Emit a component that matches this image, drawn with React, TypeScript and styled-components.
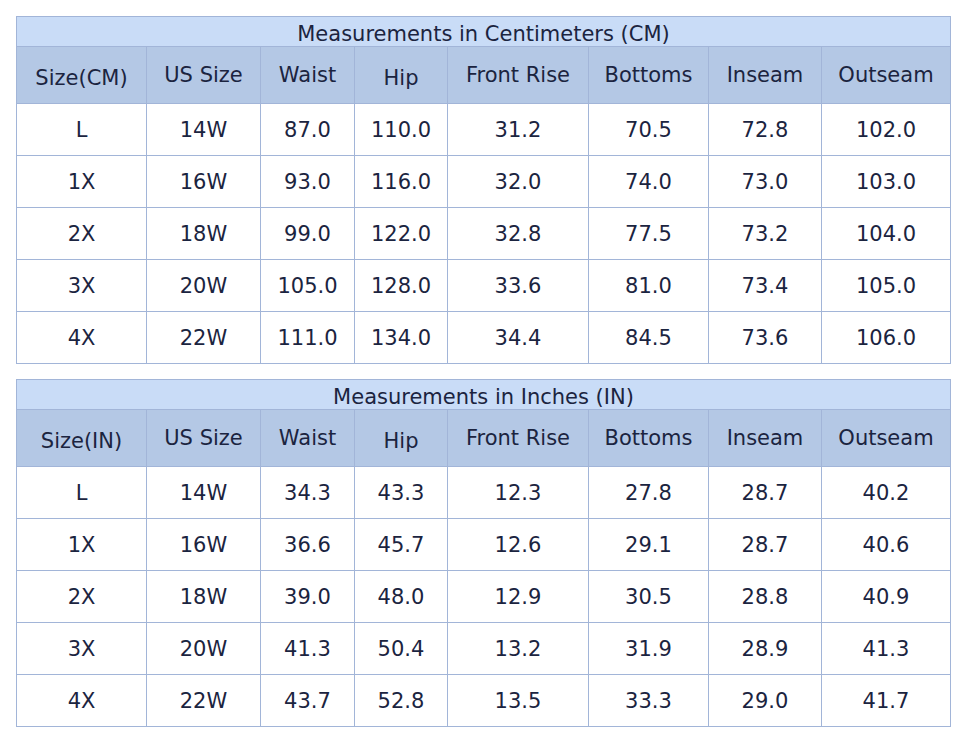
import React from 'react';
import styled, { createGlobalStyle } from 'styled-components';

const GlobalStyle = createGlobalStyle`
  html, body {
    margin: 0;
    padding: 0;
    background: #ffffff;
  }

  body {
    font-family: 'DejaVu Sans', Verdana, sans-serif;
    color: #1b2440;
  }
`;

type SizeTable = {
  title: string;
  unit: string;
  rows: string[][];
};

const COLUMNS = ['US Size', 'Waist', 'Hip', 'Front Rise', 'Bottoms', 'Inseam', 'Outseam'];

// headers that sit a little lower in the original
const LOWERED = ['Hip'];

const TABLES: SizeTable[] = [
  {
    title: 'Measurements in Centimeters (CM)',
    unit: 'Size(CM)',
    rows: [
      ['L', '14W', '87.0', '110.0', '31.2', '70.5', '72.8', '102.0'],
      ['1X', '16W', '93.0', '116.0', '32.0', '74.0', '73.0', '103.0'],
      ['2X', '18W', '99.0', '122.0', '32.8', '77.5', '73.2', '104.0'],
      ['3X', '20W', '105.0', '128.0', '33.6', '81.0', '73.4', '105.0'],
      ['4X', '22W', '111.0', '134.0', '34.4', '84.5', '73.6', '106.0'],
    ],
  },
  {
    title: 'Measurements in Inches (IN)',
    unit: 'Size(IN)',
    rows: [
      ['L', '14W', '34.3', '43.3', '12.3', '27.8', '28.7', '40.2'],
      ['1X', '16W', '36.6', '45.7', '12.6', '29.1', '28.7', '40.6'],
      ['2X', '18W', '39.0', '48.0', '12.9', '30.5', '28.8', '40.9'],
      ['3X', '20W', '41.3', '50.4', '13.2', '31.9', '28.9', '41.3'],
      ['4X', '22W', '43.7', '52.8', '13.5', '33.3', '29.0', '41.7'],
    ],
  },
];

const App = () => {
  return (
    <>
      <GlobalStyle />
      <S.Page>
        {TABLES.map((table) => (
          <S.Table key={table.title}>
            <S.Title>{table.title}</S.Title>
            <S.HeadCell $lowered>{table.unit}</S.HeadCell>
            {COLUMNS.map((col) => (
              <S.HeadCell key={col} $lowered={LOWERED.includes(col)}>
                {col}
              </S.HeadCell>
            ))}
            {table.rows.map((row) =>
              row.map((value, index) => <S.Cell key={row[0] + index}>{value}</S.Cell>),
            )}
          </S.Table>
        ))}
      </S.Page>
    </>
  );
};

export default App;

const S = {
  Page: styled.div`
    display: flex;
    flex-direction: column;
    gap: 15px;

    padding: 16px 15px 0 16px;
    width: 935px;
  `,

  Table: styled.div`
    display: grid;
    grid-template-columns: 129px 113px 93px 92px 140px 119px 112px 128px;
    grid-template-rows: 29px 56px repeat(5, 51px);
    gap: 1px;

    padding: 1px;
    background-color: #a2b5d8;
  `,

  Title: styled.div`
    grid-column: 1 / -1;
    display: flex;
    justify-content: center;
    align-items: center;

    padding-top: 4px;
    background-color: #c9dcf7;

    font-size: 21px;
  `,

  HeadCell: styled.div<{ $lowered?: boolean }>`
    display: flex;
    justify-content: center;
    align-items: center;

    padding-top: ${({ $lowered }) => ($lowered ? '6px' : '0')};
    background-color: #b4c8e5;

    font-size: 21px;
  `,

  Cell: styled.div`
    display: flex;
    justify-content: center;
    align-items: center;

    background-color: #ffffff;

    font-size: 21px;
  `,
};
